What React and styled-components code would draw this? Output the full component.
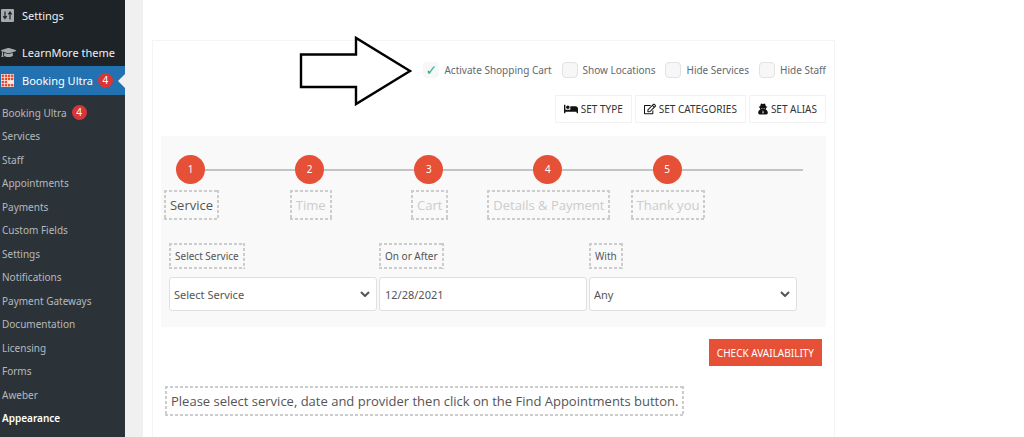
import React, { useState } from "react";
import styled, { createGlobalStyle, css } from "styled-components";
import { FaBed, FaRegEdit, FaGraduationCap } from "react-icons/fa";

const submenu = [
  "Services",
  "Staff",
  "Appointments",
  "Payments",
  "Custom Fields",
  "Settings",
  "Notifications",
  "Payment Gateways",
  "Documentation",
  "Licensing",
  "Forms",
  "Aweber",
  "Appearance",
];

const steps = ["Service", "Time", "Cart", "Details & Payment", "Thank you"];

const options = [
  { id: "cart", label: "Activate Shopping Cart" },
  { id: "locations", label: "Show Locations" },
  { id: "services", label: "Hide Services" },
  { id: "staff", label: "Hide Staff" },
];

function SettingsIcon() {
  return (
    <svg width="13" height="13" viewBox="0 0 13 13">
      <rect width="13" height="13" rx="1" fill="#a7aaad" />
      <path
        d="M4 2.5v7M2.3 7.2L4 9.5l1.7-2.3M9 3.5v7M7.3 5.3L9 3l1.7 2.3"
        fill="none"
        stroke="#1d2327"
        strokeWidth="1.2"
      />
    </svg>
  );
}

function BookingIcon() {
  const cells = [0, 1, 2, 3];
  return (
    <svg width="13" height="13" viewBox="0 0 13 13">
      <rect width="13" height="13" fill="#f9e9e4" />
      {cells.map((row) =>
        cells.map((col) =>
          row === 2 && col > 1 ? null : (
            <rect
              key={`${row}-${col}`}
              x={0.6 + col * 3.15}
              y={0.6 + row * 3.15}
              width="2.35"
              height="2.35"
              fill="#e8492c"
            />
          )
        )
      )}
    </svg>
  );
}

function AliasIcon() {
  return (
    <svg width="10" height="12" viewBox="0 0 10 12">
      <path
        d="M3 0.600L5 1l2-0.400 0.900 2.600 1.300 0.500v0.900H8.300C8.300 5.500 8 6 7.600 6.500 9 7 9.800 8.200 9.800 9.800c0 1.100-0.500 1.700-1.500 1.700H1.700C0.700 11.500 0.200 10.900 0.200 9.800 0.200 8.200 1 7 2.400 6.500 2 6 1.700 5.500 1.700 4.600H0.800V3.700l1.300-0.500z"
        fill="#111"
      />
      <path
        d="M3 4.900h1.500v0.700H3.200zM5.500 4.900h1.500L6.800 5.600H5.500zM4.400 7.800h1.200L5.300 8.500l0.400 1.700H4.300l0.400-1.700z"
        fill="#fff"
      />
    </svg>
  );
}

function App() {
  const [checked, setChecked] = useState({ cart: true });
  const [date, setDate] = useState("12/28/2021");

  const toggle = (id) => setChecked({ ...checked, [id]: !checked[id] });

  return (
    <Page>
      <GlobalStyle />
      <Sidebar>
        <MenuLink href="#settings">
          <SettingsIcon />
          Settings
        </MenuLink>
        <MenuLink href="#learnmore" $spaced>
          <FaGraduationCap size={15} color="#a7aaad" />
          LearnMore theme
        </MenuLink>
        <MenuLink href="#booking" $current>
          <BookingIcon />
          Booking Ultra <Badge>4</Badge>
        </MenuLink>
        <Submenu>
          <li>
            <SubLink href="#booking-ultra">
              Booking Ultra <Badge>4</Badge>
            </SubLink>
          </li>
          {submenu.map((item) => (
            <li key={item}>
              <SubLink href={`#${item}`} $active={item === "Appearance"}>
                {item}
              </SubLink>
            </li>
          ))}
        </Submenu>
      </Sidebar>

      <Main>
        <Card>
          <Arrow width="114" height="72" viewBox="0 0 114 72">
            <path
              d="M2 19.500H57V3L111 36 57 69V52H2z"
              fill="#fff"
              stroke="#000"
              strokeWidth="2.4"
            />
          </Arrow>

          <Options>
            {options.map(({ id, label }) => (
              <Option key={id}>
                <Checkbox
                  type="checkbox"
                  checked={!!checked[id]}
                  onChange={() => toggle(id)}
                />
                {label}
              </Option>
            ))}
          </Options>

          <Toolbar>
            <ToolButton type="button">
              <FaBed size={14} color="#111" />
              SET TYPE
            </ToolButton>
            <ToolButton type="button">
              <FaRegEdit size={12} color="#111" />
              SET CATEGORIES
            </ToolButton>
            <ToolButton type="button">
              <AliasIcon />
              SET ALIAS
            </ToolButton>
          </Toolbar>

          <Panel>
            <Steps>
              {steps.map((step, i) => (
                <Step key={step}>
                  <Track>
                    <Circle>{i + 1}</Circle>
                    <Line />
                  </Track>
                  <StepLabel>
                    <Editable $muted={i > 0}>{step}</Editable>
                  </StepLabel>
                </Step>
              ))}
            </Steps>

            <Fields>
              <Field>
                <FieldLabel htmlFor="service">Select Service</FieldLabel>
                <Select id="service">
                  <option>Select Service</option>
                </Select>
              </Field>
              <Field>
                <FieldLabel htmlFor="date">On or After</FieldLabel>
                <Input
                  id="date"
                  value={date}
                  onChange={(e) => setDate(e.target.value)}
                />
              </Field>
              <Field>
                <FieldLabel htmlFor="staff">With</FieldLabel>
                <Select id="staff">
                  <option>Any</option>
                </Select>
              </Field>
            </Fields>
          </Panel>

          <CheckButton type="button">CHECK AVAILABILITY</CheckButton>

          <Message>
            <Editable>
              Please select service, date and provider then click on the Find
              Appointments button.
            </Editable>
          </Message>
        </Card>
      </Main>
    </Page>
  );
}

const GlobalStyle = createGlobalStyle`
  * {
    box-sizing: border-box;
  }

  body {
    margin: 0;
    background: #fff;
    font-family: "Noto Sans", "Open Sans", sans-serif;
    font-size: 10px;
    color: #50575e;
  }

  button, input, select {
    font-family: inherit;
  }
`;

// dashed outline with shorter dashes than the browser's own
const dashes = css`
  background-image: repeating-linear-gradient(90deg, #ccc 0 3px, transparent 3px 5px),
    repeating-linear-gradient(90deg, #ccc 0 3px, transparent 3px 5px),
    repeating-linear-gradient(#ccc 0 3px, transparent 3px 5px),
    repeating-linear-gradient(#ccc 0 3px, transparent 3px 5px);
  background-size: 100% 2px, 100% 2px, 2px 100%, 2px 100%;
  background-position: top, bottom, left, right;
  background-repeat: no-repeat;
`;

const Page = styled.div`
  display: flex;
  min-height: 100vh;
`;

const Sidebar = styled.nav`
  flex: 0 0 125px;
  display: flex;
  flex-direction: column;
  padding-top: 1px;
  background: #1d2327;
`;

const Badge = styled.span`
  width: 15px;
  border-radius: 50%;
  background: #d63638;
  color: #fff;
  font-size: 10px;
  line-height: 15px;
  text-align: center;
`;

const MenuLink = styled.a`
  display: grid;
  grid-template-columns: 21px auto 1fr;
  align-items: center;
  height: 28px;
  margin-top: ${(props) => (props.$spaced ? "9px" : "0")};
  padding-left: 1px;
  color: #f0f0f1;
  font-size: 11px;
  text-decoration: none;
  white-space: nowrap;

  ${Badge} {
    margin-left: 5px;
  }

  ${(props) =>
    props.$current &&
    css`
      position: relative;
      height: 29px;
      background: #2271b1;
      color: #fff;

      &::after {
        content: "";
        position: absolute;
        right: 0;
        top: 8px;
        border: 7px solid transparent;
        border-left-width: 0;
        border-right-color: #f0f0f1;
      }
    `}
`;

const Submenu = styled.ul`
  flex: 1;
  margin: 0;
  padding: 6px 0 0 2px;
  list-style: none;
  background: #2c3338;

  li {
    height: 23px;
  }

  li:nth-child(even) {
    height: 24px;
  }

  li:last-child {
    height: 23px;
  }
`;

const SubLink = styled.a`
  display: flex;
  align-items: center;
  gap: 5px;
  height: 23px;
  color: ${(props) => (props.$active ? "#fff" : "#b4b9be")};
  font-weight: ${(props) => (props.$active ? 600 : 400)};
  text-decoration: none;
  white-space: nowrap;
`;

const Main = styled.main`
  flex: 1;
  display: flex;
  padding: 40px 9px 0;
  border-left: 18px solid #f0f0f1;
`;

const Card = styled.section`
  position: relative;
  flex: 1;
  display: flex;
  flex-direction: column;
  max-width: 683px;
  padding: 20px 8px 0;
  border: 1px solid #f4f4f4;
  border-bottom: 0;
`;

const Arrow = styled.svg`
  position: absolute;
  left: 146px;
  top: -6px;
`;

const Options = styled.div`
  display: flex;
  justify-content: flex-end;
  gap: 10px;
`;

const Option = styled.label`
  display: flex;
  align-items: center;
  gap: 5px;
  height: 18px;
  color: #646970;
  white-space: nowrap;
`;

const Checkbox = styled.input`
  appearance: none;
  display: grid;
  place-items: center;
  width: 16px;
  height: 16px;
  margin: 0;
  border: 1px solid #e2e2e2;
  border-radius: 4px;
  background: #f7f7f7;

  &:checked {
    border-color: #f7f7f7;
  }

  &:checked::after {
    content: "✓";
    color: #1eb287;
    font-family: "DejaVu Sans", sans-serif;
    font-size: 14px;
    font-weight: 700;
    line-height: 14px;
  }
`;

const Toolbar = styled.div`
  display: flex;
  justify-content: flex-end;
  gap: 3px;
  margin-top: 16px;
`;

const ToolButton = styled.button`
  display: flex;
  align-items: center;
  gap: 3px;
  height: 28px;
  padding: 0 8px;
  border: 1px solid #f2f2f2;
  background: #fff;
  color: #333;
  font-size: 10px;
`;

const Panel = styled.div`
  margin-top: 13px;
  padding: 19px 29px 16px 8px;
  background: #f9f9f9;
`;

const Steps = styled.ol`
  display: grid;
  grid-template-columns: repeat(4, 19%) 1fr;
  margin: 0 -6px 0 7px;
  padding: 0;
  list-style: none;
`;

const Step = styled.li`
  min-width: 0;
`;

const Track = styled.div`
  display: flex;
  align-items: center;
`;

const Circle = styled.span`
  width: 29px;
  border-radius: 50%;
  background: #e65036;
  color: #fff;
  font-size: 10px;
  line-height: 29px;
  text-align: center;
`;

const Line = styled.span`
  flex: 1;
  height: 2px;
  background: #c3c3c3;
`;

const StepLabel = styled.div`
  display: flex;
  justify-content: center;
  width: 31px;
  margin-top: 6px;
`;

const Editable = styled.span`
  ${dashes}
  flex-shrink: 0;
  padding: 2px 6px;
  color: ${(props) => (props.$muted ? "#ccc" : "#555")};
  font-family: "Open Sans", sans-serif;
  font-size: 13px;
  line-height: 26px;
  white-space: nowrap;
`;

const Fields = styled.div`
  display: grid;
  grid-template-columns: repeat(3, 1fr);
  gap: 2px;
  margin-top: 23px;
`;

const Field = styled.div`
  display: flex;
  flex-direction: column;
  align-items: flex-start;
  gap: 8px;
`;

const FieldLabel = styled.label`
  ${dashes}
  padding: 2px 6px;
  color: #555;
  font-size: 10px;
  line-height: 22px;
`;

const control = css`
  width: 100%;
  height: 34px;
  padding: 0 5px;
  border: 1px solid #e0e0e0;
  border-radius: 3px;
  background-color: #fff;
  color: #555;
  font-size: 11px;
`;

const Input = styled.input`
  ${control}
`;

const chevron =
  "%3Csvg xmlns='http://www.w3.org/2000/svg' width='10' height='6'%3E%3Cpath d='M1 1l4 4 4-4' fill='none' stroke='%23555' stroke-width='2'/%3E%3C/svg%3E";

const Select = styled.select`
  ${control}
  padding: 0 1px 0 4px;
  appearance: none;
  background-image: url("data:image/svg+xml,${chevron}");
  background-repeat: no-repeat;
  background-position: right 6px center;
`;

const CheckButton = styled.button`
  align-self: flex-end;
  height: 27px;
  margin: 12px 4px 0 0;
  padding: 0 8px;
  border: 0;
  background: #e65036;
  color: #fff;
  font-size: 10px;
`;

const Message = styled.p`
  display: flex;
  margin: 20px 0 0 4px;
`;

export default App;
